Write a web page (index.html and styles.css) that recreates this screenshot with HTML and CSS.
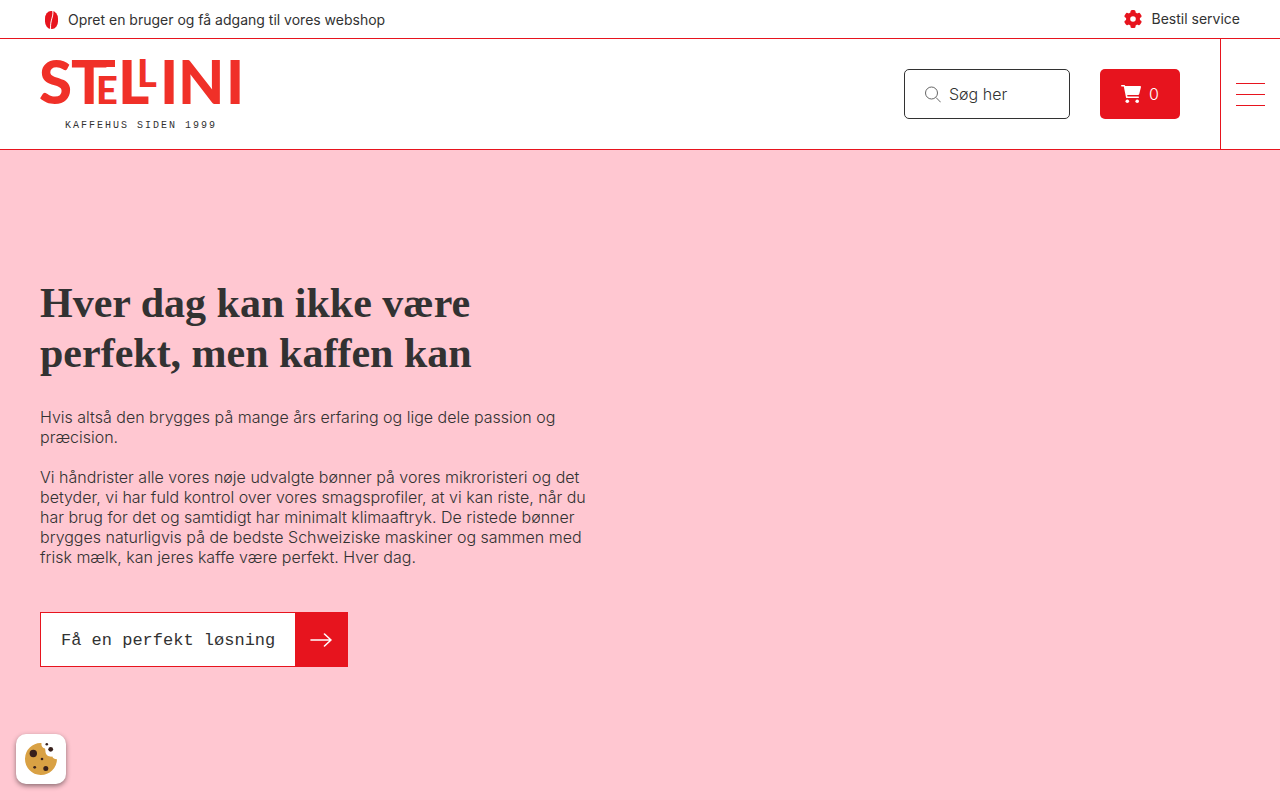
FILE: index.html
```html
<!DOCTYPE html>
<html lang="da">
<head>
  <meta charset="UTF-8">
  <meta name="viewport" content="width=device-width, initial-scale=1.0">
  <title>Stellini</title>
  <link rel="stylesheet" href="styles.css">
</head>
<body>
  <div class="topbar">
    <a class="topbar-link" href="#">
      <svg class="bean" width="13" height="18" viewBox="0 0 13 18" aria-hidden="true">
        <rect width="13" height="18" rx="6" ry="7.5" fill="#e7141e"/>
        <path d="M7.8 0C8.6 6 5 9 5.6 18" fill="none" stroke="#fff" stroke-width="1"/>
      </svg>
      <span>Opret en bruger og få adgang til vores webshop</span>
    </a>
    <a class="topbar-link service" href="#">
      <svg width="18" height="18" viewBox="0 0 18 18" aria-hidden="true">
        <g fill="#e7141e">
          <circle cx="9" cy="9" r="7"/>
          <rect x="6.5" y="0" width="5" height="18" rx="1.5"/>
          <rect x="6.5" y="0" width="5" height="18" rx="1.5" transform="rotate(60 9 9)"/>
          <rect x="6.5" y="0" width="5" height="18" rx="1.5" transform="rotate(120 9 9)"/>
        </g>
        <circle cx="9" cy="9" r="2.8" fill="#fff"/>
      </svg>
      <span>Bestil service</span>
    </a>
  </div>

  <header class="header">
    <a class="logo" href="#">
      <svg width="200" height="70" viewBox="0 0 200 70">
        <rect x="58" y="1" width="17" height="7" fill="#f03028"/>
        <text class="logo-name" y="45"><tspan x="-1">S</tspan><tspan x="31">T</tspan><tspan class="logo-small" x="56">E</tspan><tspan x="78">L</tspan><tspan class="logo-small" x="97" y="28">L</tspan><tspan x="120" y="45">I</tspan><tspan x="138">N</tspan><tspan x="186">I</tspan></text>
        <text class="logo-tagline" x="25" y="69">KAFFEHUS SIDEN 1999</text>
      </svg>
    </a>
    <div class="header-tools">
      <form class="search" role="search">
        <svg width="16" height="17" viewBox="0 0 16 17" fill="none" stroke="#666" aria-hidden="true">
          <circle cx="6.5" cy="7" r="6"/>
          <path d="M11 11.5L15.7 16.3"/>
        </svg>
        <input class="search-input" type="search" placeholder="Søg her" aria-label="Søg her">
      </form>
      <button class="cart" type="button">
        <svg width="20" height="18" viewBox="0 0 20 18" aria-hidden="true">
          <path d="M0.8 0H3.2C3.8 0 4.1 0.4 4.2 1H19.2C19.8 1 20.1 1.5 20 2L18.3 8.7C18.1 9.5 17.5 10 16.7 10H6.2L6.5 11.5H17.3C17.8 11.5 18 11.9 18 12.3S17.7 13 17.3 13H5.8C5.4 13 5.1 12.8 5 12.4L2.8 1.6H0.8C0.3 1.6 0 1.2 0 0.8S0.3 0 0.8 0Z" fill="#fff"/>
          <circle cx="6.3" cy="16.2" r="1.8" fill="#fff"/>
          <circle cx="16.2" cy="16.2" r="1.8" fill="#fff"/>
        </svg>
        <span>0</span>
      </button>
    </div>
    <button class="menu" type="button" aria-label="Menu">
      <span class="menu-line"></span>
      <span class="menu-line"></span>
      <span class="menu-line"></span>
    </button>
  </header>

  <main class="hero">
    <div class="hero-content">
      <h1>Hver dag kan ikke være<br>perfekt, men kaffen kan</h1>
      <p>Hvis altså den brygges på mange års erfaring og lige dele passion og præcision.</p>
      <p>Vi håndrister alle vores nøje udvalgte bønner på vores mikroristeri og det betyder, vi har fuld kontrol over vores smagsprofiler, at vi kan riste, når du har brug for det og samtidigt har minimalt klimaaftryk. De ristede bønner brygges naturligvis på de bedste Schweiziske maskiner og sammen med frisk mælk, kan jeres kaffe være perfekt. Hver dag.</p>
      <a class="cta" href="#">
        <span class="cta-text">Få en perfekt løsning</span>
        <span class="cta-arrow">
          <svg width="22" height="14" viewBox="0 0 22 14" fill="none" stroke="#fff" stroke-width="1.6" stroke-linecap="round" stroke-linejoin="round" aria-hidden="true">
            <path d="M1 7H21M14.5 1L21 7L14.5 13"/>
          </svg>
        </span>
      </a>
    </div>
  </main>

  <button class="cookie" type="button" aria-label="Cookies">
    <svg width="32" height="32" viewBox="0 0 32 32" aria-hidden="true">
      <path d="M16.5 0A16 16 0 1 0 32 16.3C29.8 16.4 28 15.6 27.3 13.6C24 14 20.8 12.4 20.5 9C20.4 7.5 20.3 6.6 20 5.6C17.5 5.2 16 2.8 16.5 0Z" fill="#d9a144"/>
      <g fill="#38201c">
        <circle cx="8.3" cy="10.5" r="3.7"/>
        <circle cx="25.7" cy="6.3" r="2.4"/>
        <circle cx="21.8" cy="1.3" r="1.3"/>
        <circle cx="17" cy="16" r="1.3"/>
        <circle cx="9.7" cy="24.3" r="1.4"/>
        <circle cx="20.8" cy="25.4" r="2.5"/>
      </g>
    </svg>
  </button>
</body>
</html>
```

FILE: styles.css
```css
* {
  box-sizing: border-box;
}
body {
  margin: 0;
  min-height: 100vh;
  display: flex;
  flex-direction: column;
  font-family: Inter, sans-serif;
  font-size: 16px;
  font-weight: 300;
  line-height: 20px;
  color: #323232;
  background-color: #fff;
}
a {
  color: inherit;
  text-decoration: none;
}
button {
  font: inherit;
  border: none;
  cursor: pointer;
}
svg {
  display: block;
  flex-shrink: 0;
}
.topbar {
  display: flex;
  justify-content: space-between;
  align-items: center;
  height: 39px;
  padding: 0 40px;
  border-bottom: 1px solid #e7141e;
  font-size: 14px;
  font-weight: 400;
}
.topbar-link {
  display: flex;
  align-items: center;
  gap: 10px;
  padding-top: 2px;
}
.topbar-link.service {
  padding-top: 0;
}
.bean {
  margin-left: 5px;
}
.header {
  display: flex;
  align-items: stretch;
  height: 111px;
  padding-left: 40px;
  border-bottom: 1px solid #e7141e;
}
.logo {
  align-self: center;
}
.logo svg {
  overflow: visible;
}
.logo-name {
  font-family: Lato, sans-serif;
  font-size: 60px;
  font-weight: 900;
  fill: #f03028;
}
.logo-small {
  font-size: 38px;
}
.logo-tagline {
  font-family: "Liberation Mono", monospace;
  font-size: 10px;
  font-weight: 400;
  letter-spacing: 2px;
  fill: #323232;
}
.header-tools {
  display: flex;
  align-items: center;
  gap: 30px;
  margin-left: auto;
  padding-right: 40px;
}
.search {
  display: flex;
  align-items: center;
  gap: 8px;
  width: 166px;
  height: 50px;
  padding: 0 20px;
  border: 1px solid #323232;
  border-radius: 5px;
}
.search-input {
  width: 100%;
  min-width: 0;
  padding: 0;
  border: none;
  outline: none;
  background: none;
  font: inherit;
  color: #323232;
}
.search-input::placeholder {
  color: #323232;
  opacity: 1;
}
.cart {
  display: flex;
  justify-content: center;
  align-items: center;
  gap: 8px;
  width: 80px;
  height: 50px;
  padding: 0;
  border-radius: 5px;
  background-color: #e7141e;
  color: #fff;
}
.menu {
  display: flex;
  flex-direction: column;
  justify-content: center;
  align-items: center;
  gap: 10px;
  width: 60px;
  padding: 0;
  border-left: 1px solid #e7141e;
  background: none;
}
.menu-line {
  width: 29px;
  height: 1px;
  background-color: #e7141e;
}
.hero {
  flex: 1;
  display: flex;
  align-items: center;
  padding: 40px 40px 45px;
  background-color: #ffc7d1;
}
.hero-content {
  max-width: 560px;
}
h1 {
  margin: 0 0 29px;
  font-family: "Liberation Serif", serif;
  font-size: 42px;
  font-weight: 700;
  line-height: 50px;
}
p {
  margin: 0 0 20px;
}
.cta {
  display: inline-flex;
  height: 55px;
  margin-top: 25px;
  border: 1px solid #e7141e;
  background-color: #fff;
  font-family: "Liberation Mono", monospace;
  font-size: 17px;
  font-weight: 400;
}
.cta-text {
  padding: 18px 20px 15px;
}
.cta-arrow {
  display: flex;
  justify-content: center;
  align-items: center;
  width: 52px;
  background-color: #e7141e;
}
.cookie {
  position: fixed;
  left: 16px;
  bottom: 16px;
  display: flex;
  justify-content: center;
  align-items: center;
  width: 50px;
  height: 50px;
  padding: 0;
  border-radius: 10px;
  background-color: #fff;
  box-shadow: 0 2px 5px rgba(0, 0, 0, 0.45);
}
```
